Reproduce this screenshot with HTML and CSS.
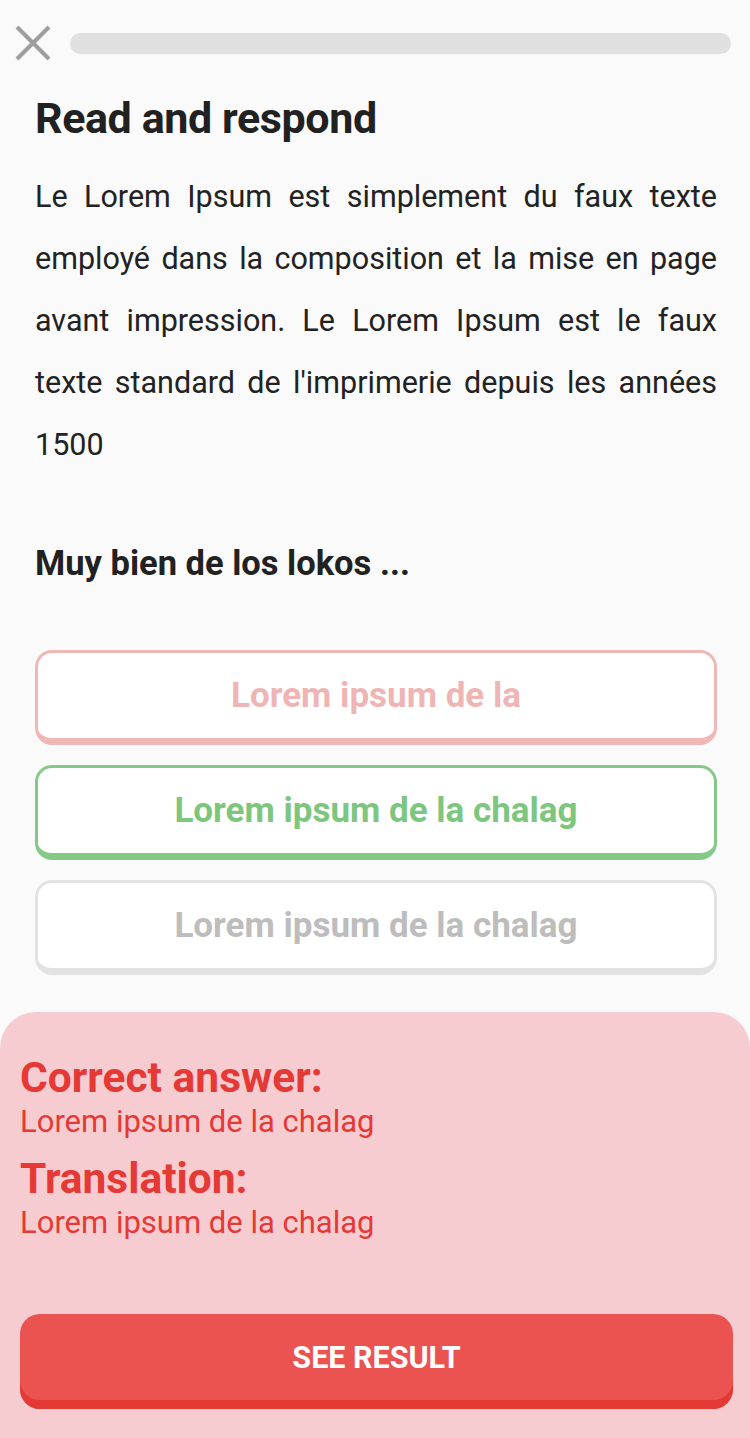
FILE: index.html
```html
<!DOCTYPE html>
<html>
<head>
<meta charset="utf-8">
<link rel="stylesheet" href="styles.css">
</head>
<body>
<div class="screen">
  <header class="topbar">
    <svg class="close" width="38" height="38" viewBox="0 0 38 38"><path d="M3 3 L35 35 M35 3 L3 35" stroke="#9e9e9e" stroke-width="4" fill="none"/></svg>
    <div class="progress"></div>
  </header>
  <main class="content">
    <h1 class="title">Read and respond</h1>
    <p class="passage">Le Lorem Ipsum est simplement du faux texte employé dans la composition et la mise en page avant impression. Le Lorem Ipsum est le faux texte standard de l'imprimerie depuis les années 1500</p>
    <h2 class="question">Muy bien de los lokos ...</h2>
    <div class="options">
      <button class="option wrong">Lorem ipsum de la</button>
      <button class="option right">Lorem ipsum de la chalag</button>
      <button class="option idle">Lorem ipsum de la chalag</button>
    </div>
  </main>
  <section class="feedback">
    <div class="label">Correct answer:</div>
    <div class="value">Lorem ipsum de la chalag</div>
    <div class="label second">Translation:</div>
    <div class="value">Lorem ipsum de la chalag</div>
    <button class="result">SEE RESULT</button>
  </section>
</div>
</body>
</html>
```
FILE: styles.css
```css
html, body {
  margin: 0;
  padding: 0;
  background: #fafafa;
}
body {
  font-family: Roboto, "Noto Sans", sans-serif;
  color: #212121;
}
.screen {
  width: 750px;
  height: 1438px;
  display: flex;
  flex-direction: column;
  overflow: hidden;
}
.topbar {
  display: flex;
  align-items: center;
  gap: 18px;
  padding: 24px 19px 0 14px;
}
.close {
  flex: none;
}
.progress {
  flex: 1;
  height: 21px;
  border-radius: 11px;
  background: #e0e0e0;
}
.content {
  padding: 0 33px 0 35px;
  flex: 1;
}
.title {
  margin: 31px 0 0;
  font-size: 43px;
  font-weight: 700;
  line-height: 50px;
  letter-spacing: -0.4px;
}
.passage {
  margin: 23px 0 0;
  font-size: 30.5px;
  line-height: 62px;
  text-align: justify;
  color: #222;
}
.question {
  margin: 67px 0 0;
  font-size: 34.5px;
  line-height: 40px;
  font-weight: 700;
}
.options {
  margin-top: 67px;
  display: flex;
  flex-direction: column;
  gap: 20px;
}
.option {
  height: 95px;
  box-sizing: border-box;
  border: 3px solid;
  border-bottom-width: 7px;
  border-radius: 17px;
  background: #fff;
  font-family: inherit;
  font-size: 35px;
  font-weight: 700;
  padding: 0;
}
.wrong { border-color: #f0b7b7; color: #efb5b5; }
.right { border-color: #84c987; color: #7cc67f; }
.idle { border-color: #e2e2e2; color: #bdbdbd; }
.feedback {
  height: 426px;
  box-sizing: border-box;
  background: #f7ccd1;
  border-radius: 36px 36px 0 0;
  padding: 40px 17px 0 20px;
  display: flex;
  flex-direction: column;
  color: #e53935;
}
.label {
  font-size: 42.5px;
  font-weight: 700;
  line-height: 52px;
}
.label.second {
  margin-top: 13px;
}
.value {
  font-size: 31px;
  line-height: 36px;
}
.result {
  margin-top: 73px;
  height: 95px;
  border: none;
  border-radius: 20px;
  background: #eb5350;
  box-shadow: inset 0 -9px 0 #e53935;
  color: #fff;
  font-family: inherit;
  font-size: 30.5px;
  font-weight: 700;
  padding: 0 0 8px;
}
```
